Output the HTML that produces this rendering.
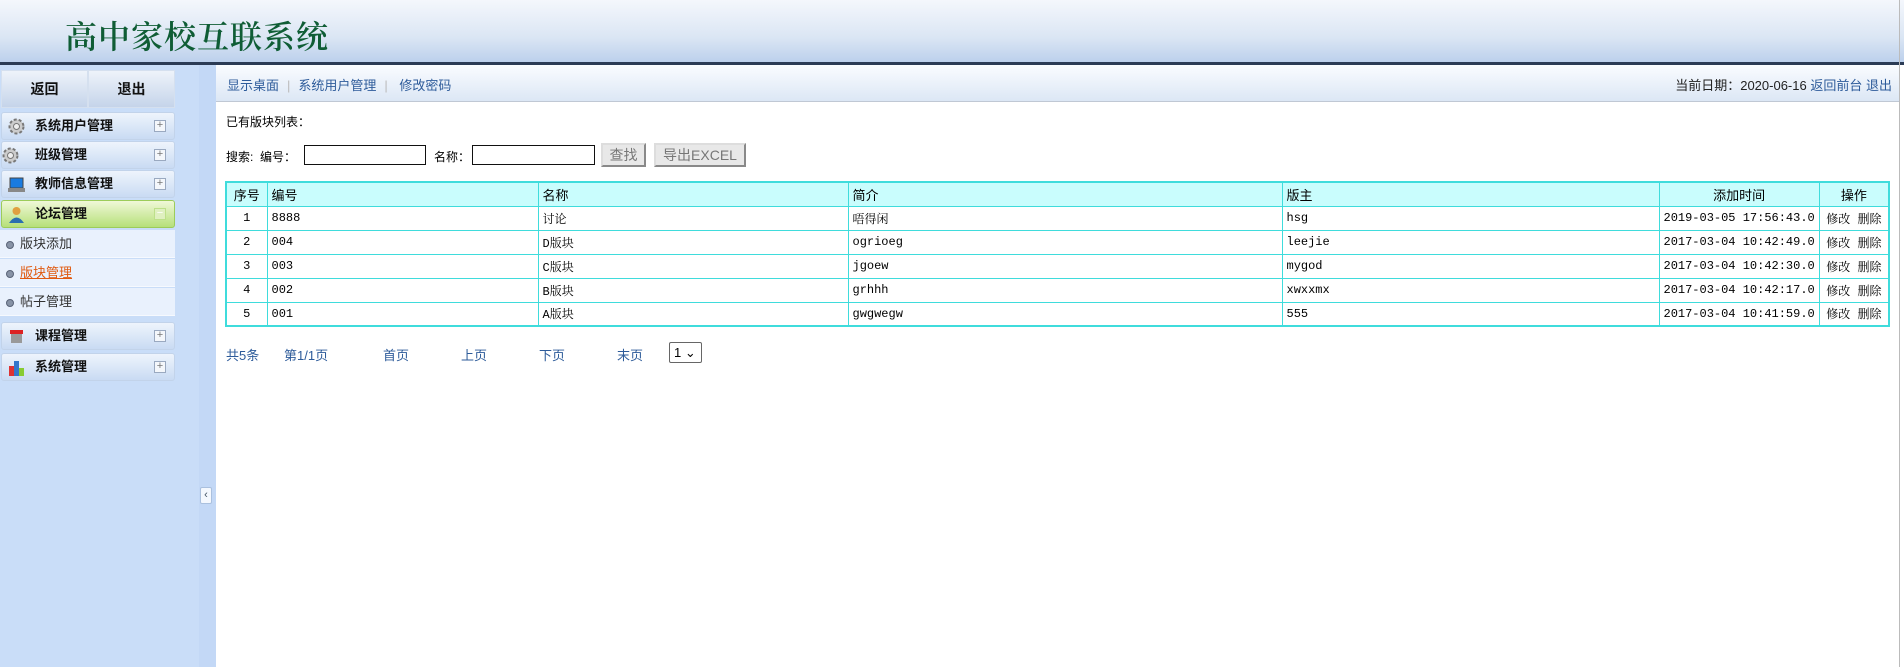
<!DOCTYPE html>
<html><head><meta charset="utf-8"><style>
*{margin:0;padding:0;box-sizing:border-box}
body{width:1904px;height:667px;overflow:hidden;position:relative;background:#fff;font-family:"Liberation Sans","Noto Sans CJK SC",sans-serif;font-size:12px;color:#000}
.a{position:absolute}
#hd{left:0;top:0;width:1904px;height:62px;background:linear-gradient(#f4f7fc,#dbe6f4 60%,#bcd0ec)}
#hd h1{position:absolute;left:65px;top:12px;font:32px "Noto Serif CJK SC","Liberation Serif",serif;color:#0f5d35;letter-spacing:1px;font-weight:600}
#line{left:0;top:62px;width:1904px;height:3px;background:#2b3b55}
#sb{left:0;top:65px;width:199px;height:602px;background:#c9ddf8}
#sb2{left:199px;top:65px;width:17px;height:602px;background:#c3d8f6}
.btn{top:70px;width:87px;height:38px;background:linear-gradient(#eef3fa,#c5d4ea);border:1px solid #d5e0ef;font-weight:bold;font-size:14px;text-align:center;line-height:36px;color:#111}
.m{left:1px;width:174px;height:28px;background:linear-gradient(#eef4fc,#c9dbf3);border:1px solid #c2d3ea;border-radius:3px;font-weight:bold;font-size:13px;line-height:26px;padding-left:33px;color:#111}
.m i{position:absolute;right:8px;top:7px;width:12px;height:12px;border:1px solid #9aa9c0;background:#f4f7fb;font-style:normal;font-size:11px;line-height:9px;text-align:center;color:#777;font-weight:normal}
.ic{position:absolute;left:6px;top:5px;width:17px;height:17px}
.g{background:linear-gradient(#f0f8d8,#b6e07a);border-color:#9ccc5a}
.s{left:0;width:175px;height:28px;background:#e9f1fd;border-bottom:1px solid #f6f9fe;font-size:13px;line-height:28px;padding-left:20px;color:#333}
.s:before{content:"";position:absolute;left:6px;top:11px;width:6px;height:6px;border-radius:50%;background:#8893a6;border:1px solid #596377}
#nav{left:216px;top:65px;width:1684px;height:37px;background:linear-gradient(#fafcff,#dce7f5);border-bottom:1px solid #c0c8d4;font-size:13px;line-height:42px;color:#2d5b9a}
#nav span.sep{color:#bbb;margin:0 8px}
#rt{right:8px;top:0;color:#222}
#rt b{font-weight:normal;color:#2d5b9a}
table{position:absolute;left:225px;top:181px;width:1665px;border-collapse:collapse;font-family:"Liberation Mono","Noto Serif CJK SC",monospace;font-size:12px;border:2px solid #3fdcdc}
td,th{border:1px solid #3fdcdc;height:24px;padding:0 4px;font-weight:normal;text-align:left;white-space:nowrap}
th{background:#c9fdfd;font-family:"Liberation Sans","Noto Sans CJK SC",sans-serif;font-size:13px}
.c{text-align:center}
input.t{position:absolute;height:20px;border:1px solid #111}
.bt{position:absolute;top:143px;height:24px;background:#e8e8e8;border:2px outset #ddd;color:#777;font-size:14px;line-height:20px;text-align:center}
.pg{position:absolute;top:345px;font-size:13px;color:#2d5b9a}
</style></head><body>
<div id="hd" class="a"><h1>高中家校互联系统</h1></div>
<div id="line" class="a"></div>
<div id="sb" class="a"></div><div id="sb2" class="a"></div>
<div class="a" style="left:200px;top:487px;width:12px;height:17px;background:#f4f8fe;border:1px solid #aac0de;border-radius:2px;color:#456;font-size:11px;line-height:15px;text-align:center">‹</div>
<div class="a btn" style="left:1px">返回</div>
<div class="a btn" style="left:88px">退出</div>
<div class="a m" style="top:112px"><svg class="ic" viewBox="0 0 17 17"><circle cx="8.5" cy="8.5" r="7" fill="#ccc" stroke="#777" stroke-dasharray="3 2" stroke-width="2"/><circle cx="8.5" cy="8.5" r="3" fill="#eee" stroke="#777"/></svg>系统用户管理<i>+</i></div>
<div class="a m" style="top:141px"><svg class="ic" style="left:0" viewBox="0 0 17 17"><circle cx="8.5" cy="8.5" r="7" fill="#ccc" stroke="#777" stroke-dasharray="3 2" stroke-width="2"/><circle cx="8.5" cy="8.5" r="3" fill="#eee" stroke="#777"/></svg>班级管理<i>+</i></div>
<div class="a m" style="top:170px"><svg class="ic" viewBox="0 0 17 17"><rect x="2" y="2" width="13" height="10" fill="#1a7be0" stroke="#444"/><rect x="0" y="12" width="17" height="4" fill="#888"/></svg>教师信息管理<i>+</i></div>
<div class="a m g" style="top:200px"><svg class="ic" viewBox="0 0 17 17"><circle cx="8.5" cy="5" r="4" fill="#e0a040"/><path d="M1 17 Q8.5 6 16 17Z" fill="#2a6fb0"/></svg>论坛管理<i style="border-color:#bde08a;background:#dff0c0;color:#fff">−</i></div>
<div class="a s" style="top:230px">版块添加</div>
<div class="a s" style="top:259px;color:#e05a10;text-decoration:underline">版块管理</div>
<div class="a s" style="top:288px">帖子管理</div>
<div class="a m" style="top:322px"><svg class="ic" viewBox="0 0 17 17"><rect x="2" y="2" width="13" height="4" fill="#d22"/><rect x="3" y="6" width="11" height="9" fill="#999"/></svg>课程管理<i>+</i></div>
<div class="a m" style="top:353px"><svg class="ic" viewBox="0 0 17 17"><rect x="1" y="7" width="5" height="10" fill="#d33"/><rect x="6" y="2" width="5" height="15" fill="#37c"/><rect x="11" y="9" width="5" height="8" fill="#8c3"/></svg>系统管理<i>+</i></div>

<div id="nav" class="a"><span style="margin-left:11px">显示桌面</span><span class="sep">|</span>系统用户管理<span class="sep">|</span> 修改密码
<div id="rt" class="a">当前日期：2020-06-16 <b>返回前台</b> <b>退出</b></div></div>

<div class="a" style="left:226px;top:113px;font-size:12px">已有版块列表：</div>
<div class="a" style="left:226px;top:148px;font-size:12px">搜索: &nbsp;编号：</div>
<input class="t" style="left:304px;top:145px;width:122px">
<div class="a" style="left:434px;top:148px;font-size:12px">名称：</div>
<input class="t" style="left:472px;top:145px;width:123px">
<div class="bt" style="left:601px;width:45px">查找</div>
<div class="bt" style="left:654px;width:92px">导出EXCEL</div>

<table>
<tr><th class="c" style="width:41px">序号</th><th style="width:271px">编号</th><th style="width:310px">名称</th><th style="width:434px">简介</th><th style="width:377px">版主</th><th class="c" style="width:158px">添加时间</th><th class="c">操作</th></tr>
<tr><td class="c">1</td><td>8888</td><td>讨论</td><td>唔得闲</td><td>hsg</td><td class="c">2019-03-05 17:56:43.0</td><td class="c">修改 删除</td></tr>
<tr><td class="c">2</td><td>004</td><td>D版块</td><td>ogrioeg</td><td>leejie</td><td class="c">2017-03-04 10:42:49.0</td><td class="c">修改 删除</td></tr>
<tr><td class="c">3</td><td>003</td><td>C版块</td><td>jgoew</td><td>mygod</td><td class="c">2017-03-04 10:42:30.0</td><td class="c">修改 删除</td></tr>
<tr><td class="c">4</td><td>002</td><td>B版块</td><td>grhhh</td><td>xwxxmx</td><td class="c">2017-03-04 10:42:17.0</td><td class="c">修改 删除</td></tr>
<tr><td class="c">5</td><td>001</td><td>A版块</td><td>gwgwegw</td><td>555</td><td class="c">2017-03-04 10:41:59.0</td><td class="c">修改 删除</td></tr>
</table>

<div class="pg" style="left:226px">共5条</div>
<div class="pg" style="left:284px">第1/1页</div>
<div class="pg" style="left:383px">首页</div>
<div class="pg" style="left:461px">上页</div>
<div class="pg" style="left:539px">下页</div>
<div class="pg" style="left:617px">末页</div>
<div class="a" style="left:669px;top:342px;width:33px;height:21px;border:1px solid #666;border-radius:2px;font-size:13px;line-height:19px;padding-left:4px">1 ⌄</div>
<div class="a" style="left:1899px;top:0;width:1px;height:667px;background:#bbb"></div>
</body></html>
